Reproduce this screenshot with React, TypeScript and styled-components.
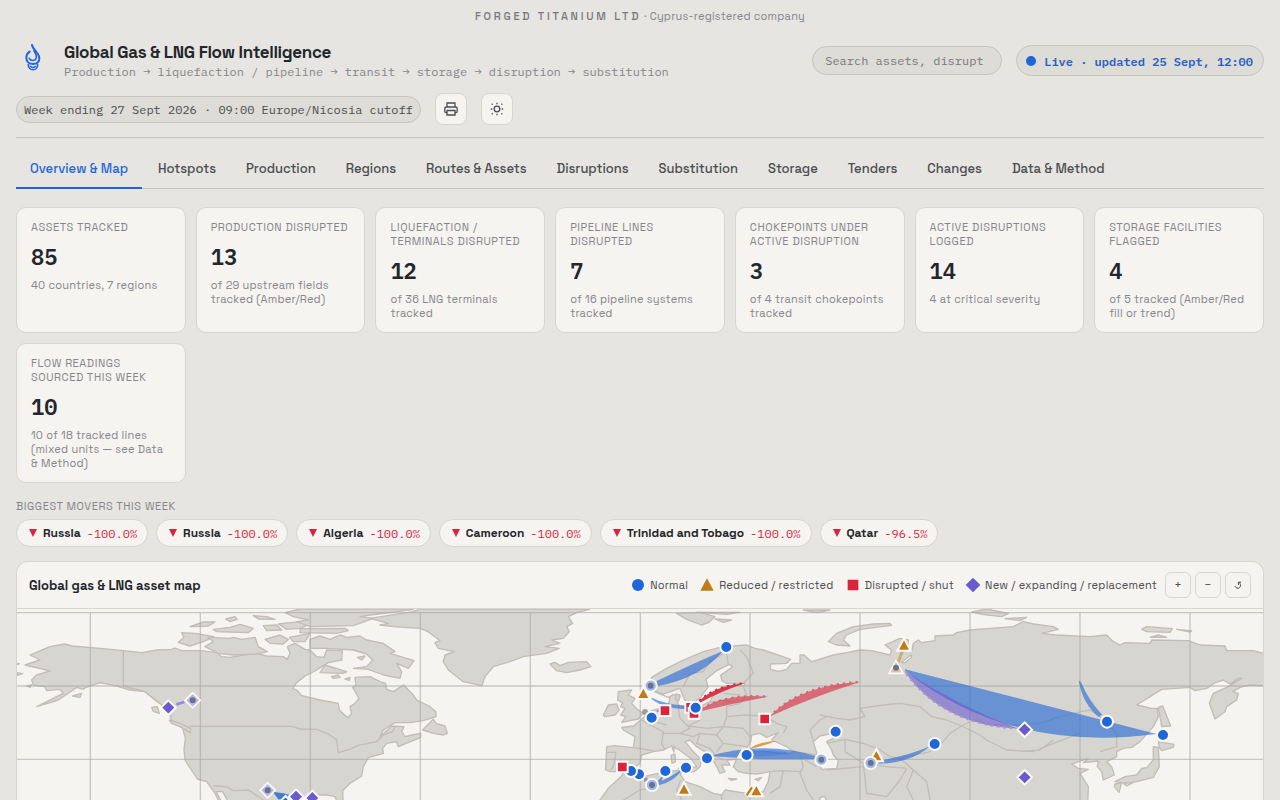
import React from 'react';
import styled, { createGlobalStyle } from 'styled-components';

const sans = '"Space Grotesk", Inter, "Liberation Sans", sans-serif';
const mono = '"IBM Plex Mono", "Liberation Mono", monospace';

const c = {
  page: '#e6e5e1',
  card: '#f5f4f0',
  sunken: '#dddcd6',
  line: '#c5c4c0',
  soft: '#d6d5cf',
  ink: '#23262b',
  text: '#4a4d50',
  muted: '#85868a',
  blue: '#1f66d9',
  red: '#d9243c',
  amber: '#c07c16',
  violet: '#6a5acd',
  land: '#d6d5d0',
  coast: '#c2bdb5',
};

const GlobalStyle = createGlobalStyle`
  * { box-sizing: border-box; }
  body { margin: 0; background: ${c.page}; color: ${c.ink}; font-family: ${sans}; }
  button, input { font: inherit; }
`;

const Page = styled.div`
  padding: 0 16px;
`;

const CompanyLine = styled.div`
  padding: 10px 0;
  text-align: center;
  font-size: 11px;
  line-height: 13px;
  letter-spacing: 0.02em;
  color: ${c.muted};
  strong {
    font-weight: 500;
    letter-spacing: 0.25em;
    color: #77787a;
  }
`;

const Header = styled.header`
  display: flex;
  flex-wrap: wrap;
  align-items: center;
  gap: 14px;
  padding: 8px 0 12px;
  border-bottom: 1px solid ${c.line};
`;

const Brand = styled.div`
  display: flex;
  flex: 1;
  align-items: flex-start;
  gap: 14px;
  height: 38px;
`;

const BrandMark = styled.svg`
  width: 34px;
  height: 34px;
`;

const Title = styled.h1`
  margin: 0;
  font-size: 17px;
  font-weight: 600;
  line-height: 22px;
  letter-spacing: -0.02em;
`;

const Subtitle = styled.p`
  margin: 0;
  font-family: ${mono};
  font-size: 12px;
  line-height: 18px;
  color: ${c.muted};
`;

const Search = styled.input`
  width: 190px;
  height: 29px;
  padding: 0 18px 0 12px;
  border: 1px solid ${c.line};
  border-radius: 15px;
  background: ${c.sunken};
  font-family: ${mono};
  font-size: 12px;
  &::placeholder {
    color: #77777a;
    opacity: 1;
  }
`;

const Live = styled.div`
  display: flex;
  align-items: center;
  gap: 8px;
  height: 31px;
  padding: 2px 10px 0 9px;
  border: 1px solid ${c.line};
  border-radius: 16px;
  background: ${c.sunken};
  font-family: ${mono};
  font-size: 12px;
  font-weight: 600;
  color: #2b5fc4;
  &::before {
    content: '';
    width: 10px;
    height: 10px;
    border-radius: 50%;
    background: ${c.blue};
  }
`;

const HeaderRow = styled.div`
  display: flex;
  flex-basis: 100%;
  align-items: center;
  gap: 14px;
`;

const WeekPill = styled.div`
  height: 27px;
  padding: 0 7px;
  border: 1px solid ${c.line};
  border-radius: 14px;
  background: ${c.sunken};
  font-family: ${mono};
  font-size: 12px;
  line-height: 26px;
  color: ${c.text};
`;

const IconButton = styled.button`
  display: grid;
  place-items: center;
  width: 32px;
  height: 32px;
  padding: 0;
  border: 1px solid ${c.soft};
  border-radius: 8px;
  background: ${c.card};
  color: ${c.text};
`;

const Tabs = styled.nav`
  display: flex;
  gap: 2px;
  margin-top: 12px;
  border-bottom: 1px solid ${c.line};
`;

const Tab = styled.a<{ $active?: boolean }>`
  padding: 10px 14px 9px;
  border-bottom: 2px solid ${(p) => (p.$active ? c.blue : 'transparent')};
  margin-bottom: -1px;
  font-size: 13px;
  font-weight: 500;
  line-height: 18px;
  color: ${(p) => (p.$active ? c.blue : c.text)};
  text-decoration: none;
`;

const Cards = styled.section`
  display: grid;
  grid-template-columns: repeat(auto-fill, minmax(160px, 1fr));
  gap: 10px;
  margin-top: 18px;
`;

const Card = styled.article`
  min-height: 126px;
  padding: 12px 14px;
  border: 1px solid ${c.soft};
  border-radius: 10px;
  background: ${c.card};
`;

const Label = styled.h2`
  margin: 0;
  font-size: 11px;
  font-weight: 400;
  line-height: 14px;
  letter-spacing: 0.05em;
  text-transform: uppercase;
  color: ${c.muted};
`;

const Value = styled.div`
  margin: 8px 0 6px;
  font-family: ${mono};
  font-size: 22px;
  font-weight: 600;
  line-height: 30px;
`;

const Note = styled.p`
  margin: 0;
  font-size: 11px;
  line-height: 14px;
  letter-spacing: 0.02em;
  color: ${c.muted};
`;

const Movers = styled.section`
  margin-top: 16px;
`;

const Chips = styled.div`
  display: flex;
  flex-wrap: wrap;
  gap: 8px;
  margin-top: 6px;
`;

const Chip = styled.div`
  display: flex;
  align-items: center;
  gap: 6px;
  height: 28px;
  padding: 0 10px 0 12px;
  border: 1px solid ${c.soft};
  border-radius: 14px;
  background: ${c.card};
  font-size: 12px;
  font-weight: 600;
  svg {
    width: 8px;
    height: 9px;
    fill: ${c.red};
  }
  span {
    font-family: ${mono};
    font-weight: 400;
    color: ${c.red};
  }
`;

const Panel = styled.section`
  margin-top: 14px;
  border: 1px solid ${c.soft};
  border-bottom: 0;
  border-radius: 12px 12px 0 0;
  overflow: hidden;
  background: ${c.card};
`;

const PanelHead = styled.div`
  display: flex;
  align-items: center;
  justify-content: space-between;
  height: 47px;
  padding: 0 12px;
  border-bottom: 1px solid ${c.soft};
`;

const PanelTitle = styled.h2`
  margin: 0;
  font-size: 13px;
  font-weight: 600;
`;

const Legend = styled.div`
  display: flex;
  align-items: center;
  gap: 12px;
  font-size: 11px;
  letter-spacing: 0.02em;
  color: ${c.text};
`;

const LegendItem = styled.span`
  display: flex;
  align-items: center;
  gap: 5px;
  svg {
    width: 14px;
    height: 14px;
    overflow: visible;
  }
`;

const Zoom = styled.div`
  display: flex;
  gap: 4px;
  margin-left: -4px;
`;

const ZoomButton = styled.button`
  width: 26px;
  height: 26px;
  padding: 0;
  border: 1px solid ${c.soft};
  border-radius: 6px;
  background: ${c.card};
  font-size: 12px;
  color: ${c.text};
`;

const MapSvg = styled.svg`
  display: block;
  width: 100%;
`;

type Kind = 'circle' | 'triangle' | 'square' | 'diamond';

const fills: Record<Kind, string> = {
  circle: c.blue,
  triangle: c.amber,
  square: c.red,
  diamond: c.violet,
};

function Shape({ kind }: { kind: Kind }) {
  if (kind === 'circle') return <circle r="18" />;
  if (kind === 'triangle') return <path d="M0-20L20 17H-20Z" />;
  if (kind === 'square') return <path d="M-16-16H16V16H-16Z" />;
  return <path d="M0-22L22 0L0 22L-22 0Z" />;
}

function Marker({ kind, x, y, muted }: { kind: Kind; x: number; y: number; muted?: boolean }) {
  return (
    <g transform={`translate(${x} ${y})`}>
      <g fill={muted ? c.card : fills[kind]} stroke="#fbfaf8" strokeWidth="6">
        <Shape kind={kind} />
      </g>
      {muted && (
        <>
          <g fill={fills[kind]} opacity="0.4" transform="scale(.86)">
            <Shape kind={kind} />
          </g>
          <circle r="9" fill="#68718f" />
        </>
      )}
    </g>
  );
}

const markers: [Kind, number, number, boolean?][] = [
  ['diamond', 578, 301, true],
  ['diamond', 505, 323],
  ['diamond', 803, 571, true],
  ['diamond', 888, 590],
  ['diamond', 937, 594],
  ['circle', 2179, 141],
  ['circle', 1952, 257, true],
  ['triangle', 1930, 280],
  ['square', 1995, 332],
  ['circle', 1955, 353],
  ['square', 2072, 322],
  ['square', 2082, 340],
  ['circle', 2087, 323],
  ['square', 2294, 357],
  ['circle', 2507, 395],
  ['circle', 2240, 465],
  ['circle', 2121, 475],
  ['circle', 2464, 479, true],
  ['circle', 2058, 503],
  ['circle', 1996, 513],
  ['circle', 1917, 523],
  ['circle', 1893, 513],
  ['square', 1867, 501],
  ['circle', 1956, 555, true],
  ['triangle', 2052, 567],
  ['triangle', 2269, 572],
  ['triangle', 2712, 135],
  ['triangle', 2688, 203, true],
  ['triangle', 2629, 467],
  ['circle', 2612, 489, true],
  ['circle', 2804, 432],
  ['diamond', 3074, 389],
  ['diamond', 3074, 532],
  ['circle', 3321, 365],
  ['circle', 3489, 405],
];

const land = [
  // North America
  'M90 165L150 140L195 132L215 138L300 145L370 152L425 158L470 150L515 148L525 144L545 152L600 152L650 158L665 170L690 172L740 164L770 160L800 168L850 170L862 178L870 160L862 140L885 130L915 148L930 150L950 170L972 172L980 150L1027 152L1025 180L985 188L965 200L945 213L915 228L890 248L878 265L890 270L905 287L960 300L1015 310L1018 330L1043 353L1055 340L1050 320L1065 310L1077 295L1058 262L1068 255L1065 232L1110 230L1140 245L1157 250L1160 268L1180 275L1210 255L1240 285L1250 300L1290 320L1308 335L1308 350L1270 362L1230 368L1185 368L1150 390L1140 410L1175 378L1212 380L1205 395L1215 410L1235 405L1262 400L1262 412L1195 440L1190 425L1160 430L1148 445L1150 460L1105 473L1090 500L1085 528L1050 550L1028 572L1030 620L1018 620L1005 590L980 585L940 585L920 592L860 590L845 620L665 620L645 580L620 545L592 537L555 480L552 450L556 415L548 385L515 360L500 325L465 300L435 275L390 270L350 258L300 248L258 262L250 268L230 262L175 300L110 320L190 280L180 268L140 272L135 260L100 255L95 240L110 225L150 213L130 208L75 195L120 180Z',
  'M545 98L585 100L642 110L610 125L570 138L535 127L552 112Z',
  'M625 112L690 115L700 112L725 118L765 112L775 140L802 155L770 162L700 165L655 160L615 140L640 125Z',
  'M570 80L610 66L645 66L625 78Z',
  'M640 88L690 82L720 73L760 85L745 98L690 96L650 95Z',
  'M677 57L705 50L712 58L690 65Z',
  'M760 47L800 50L825 58L775 57Z',
  'M790 77L830 75L845 90L800 92Z',
  'M795 118L840 105L865 118L850 132L810 130Z',
  'M835 72L900 65L925 75L900 85L860 88Z',
  'M868 112L930 100L915 125L880 125Z',
  'M855 38L900 27L1190 27L1240 29L1110 45L1080 50L1120 55L1060 77L930 80L890 65L925 60L880 50Z',
  'M900 86L1035 85L1045 92L1010 100L900 98Z',
  'M930 118L960 108L990 118L1020 105L1040 112L1080 108L1100 120L1150 130L1185 155L1170 160L1242 182L1225 205L1190 190L1205 215L1200 235L1150 225L1105 208L1060 205L1100 200L1118 180L1100 162L1060 150L980 145L930 145Z',
  'M1072 172L1095 168L1085 180Z',
  'M975 195L1040 215L1030 220L960 218Z',
  'M995 230L1015 225L1020 232L1000 235Z',
  'M1035 237L1050 232L1048 241Z',
  'M1268 390L1300 357L1308 370L1335 378L1342 400L1330 405L1300 400Z',
  'M455 322L472 320L478 340L460 334Z',
  'M508 360L540 370L572 385L570 398L545 382L515 370Z',
  'M51 190L58 191L51 194ZM51 218L68 221L51 226ZM80 258L95 255L90 262Z',
  'M218 288L245 280L240 292Z',
  // Greenland and Iceland
  'M1260 27L1770 27L1730 38L1705 50L1718 70L1700 80L1708 95L1690 115L1655 120L1680 130L1635 140L1678 145L1640 160L1570 170L1530 185L1480 200L1455 230L1445 257L1390 245L1345 210L1330 185L1335 165L1362 155L1315 145L1305 128L1320 122L1285 95L1260 85L1180 80L1140 75L1165 70L1110 55L1240 35Z',
  'M1650 192L1665 187L1680 197L1705 187L1760 185L1773 200L1740 210L1700 218L1670 212Z',
  // British Isles
  'M1855 275L1895 270L1885 285L1905 295L1895 310L1912 328L1928 340L1915 357L1865 367L1878 350L1862 345L1875 325L1862 320L1868 308L1853 300Z',
  'M1810 345L1825 315L1850 312L1857 330L1845 345L1815 350Z',
  // Eurasia and North Africa
  'M1820 440L1845 437L1900 443L1905 410L1870 390L1865 382L1900 378L1920 362L1935 348L1955 332L1980 325L2005 315L2012 285L1985 280L1960 270L1953 245L1955 232L2000 205L2050 180L2110 155L2170 140L2240 135L2265 145L2290 150L2372 178L2360 190L2310 192L2312 208L2335 214L2360 208L2375 190L2400 190L2400 165L2412 165L2435 185L2500 165L2540 158L2580 150L2615 152L2670 165L2675 150L2655 135L2700 115L2725 120L2722 150L2735 155L2740 130L2755 120L2765 128L2805 122L2805 108L2860 105L2870 98L2910 90L3040 80L3070 65L3100 72L3160 80L3175 88L3125 100L3170 105L3270 110L3320 105L3340 125L3360 135L3375 128L3450 130L3455 120L3565 122L3600 135L3675 138L3680 152L3760 152L3800 162V258L3750 255L3720 262L3698 275L3715 280L3710 300L3680 320L3675 335L3645 357L3628 310L3640 280L3680 262L3725 235L3715 235L3690 252L3670 240L3645 248L3620 265L3585 272L3570 262L3485 268L3410 315L3455 325L3472 325L3475 350L3460 380L3420 425L3395 442L3370 445L3350 455L3350 470L3320 485L3335 500L3343 525L3310 540L3305 515L3292 500L3295 483L3250 488L3265 475L3215 492L3235 505L3265 508L3240 520L3265 560L3263 620H1790L1800 600L1825 565L1865 528L1870 515L1830 515L1817 510Z',
  'M2030 40L2100 37L2145 50L2125 68L2105 75L2060 58Z',
  'M2145 57L2195 60L2170 67ZM2090 37L2220 37L2180 43ZM2410 30L2490 30L2450 38Z',
  'M2485 125L2510 100L2560 80L2620 72L2670 70L2675 76L2580 88L2540 105L2530 120L2550 138L2510 135Z',
  'M2915 36L2960 27L3025 40L3005 50L2950 44ZM3015 56L3080 52L3060 62Z',
  'M3425 88L3440 80L3517 86L3510 97L3440 95ZM3530 88L3575 93L3570 96ZM3450 112L3475 105L3500 112Z',
  'M3475 322L3488 318L3512 378L3485 380Z',
  'M3475 425L3522 433L3520 442L3485 452L3478 442Z',
  'M3460 440L3475 442L3478 500L3460 532L3410 545L3380 550L3345 545L3375 530L3410 525L3425 505L3440 503L3460 480Z',
  'M3345 552L3365 548L3357 577L3343 560ZM3370 550L3400 547L3380 558Z',
];

const seas = [
  // Baltic and Skagerrak
  'M1955 272L1988 283L2025 270L2040 265L2048 285L2060 312L2068 314L2098 296L2124 262L2118 238L2150 212L2188 193L2198 200L2162 226L2166 243L2180 250L2235 250L2235 257L2185 257L2165 262L2140 285L2130 305L2100 320L2068 322L2040 318L2032 310L2040 290L2020 284L2005 292Z',
  // Mediterranean
  'M1868 518L1895 510L1920 490L1925 465L1960 455L1990 450L2015 438L2035 448L2075 478L2090 500L2060 505L2035 505L2065 517L2082 515L2100 500L2105 480L2080 455L2055 425L2070 420L2090 440L2130 465L2145 490L2160 520L2175 515L2165 495L2190 495L2180 480L2210 478L2200 500L2215 515L2240 520L2270 522L2310 515L2305 545L2290 575L2240 580L2175 570L2165 585L2140 580L2100 560L2055 545L2042 525L2045 510L2000 515L1930 530L1895 528Z',
  // Black Sea
  'M2240 445L2252 425L2255 405L2280 400L2300 412L2335 398L2315 420L2360 440L2380 455L2370 462L2300 455L2250 452Z',
  // Caspian
  'M2440 425L2460 408L2495 400L2500 415L2480 425L2495 450L2500 465L2515 482L2510 505L2465 508L2455 485L2450 460Z',
  'M648 575L668 575L690 615L670 615Z',
  'M2705 187L2733 165L2735 172L2715 188ZM2460 592L2475 590L2485 620L2460 620Z',
];

const islands = ['M2013 466L2025 462L2026 486L2016 490Z', 'M2016 442L2023 438L2022 456Z', 'M2042 507L2075 503L2070 516Z', 'M2028 282L2040 285L2036 302L2026 298Z', 'M2185 535L2210 537L2195 541ZM2265 538L2285 532L2275 542Z'];

const borders = [
  'M370 152V258L435 275L480 310',
  'M570 379H875L900 387L950 388L985 402L1010 420L1015 458L1050 448L1075 436L1130 425L1150 405L1178 395L1185 380',
  'M640 558L680 560L700 572L745 570L790 600',
  'M1822 457L1848 457L1840 500L1832 510M1900 443L1960 452M1925 360L1950 375L1990 395L1985 430L1995 450M1955 340L1965 365L2000 375M1985 400L2040 400L2070 385L2040 355L2035 325M2095 325L2100 360L2065 378L2120 385L2170 380L2180 350L2180 320M2040 400L2080 410L2100 400L2150 405L2170 380M2100 400L2090 430L2130 445L2150 470L2170 480M2150 405L2170 430L2240 440M2170 430L2150 455M2180 350L2240 345L2300 350L2330 370L2360 380L2350 400M2180 320L2220 310L2240 285L2230 260M2120 310L2170 300L2220 310M2170 280L2220 285M2170 380L2230 385L2250 410M2230 250L2260 220L2240 170L2220 150M2130 185L2110 215L2070 220L2050 260M2130 185L2170 160M2180 160L2185 195M2380 455L2420 460L2450 465M2400 460L2410 500L2400 520L2420 570L2440 600M2310 515L2350 512L2400 515M2350 512L2340 560L2310 580M2165 585V620M1970 560L1920 570L1870 600M2042 540L2030 570L2045 600M2415 480L2450 500',
  'M2460 345L2510 355L2550 360L2595 350L2580 325L2650 315L2700 310L2760 320L2795 350L2840 360L2885 378L2920 360L2970 375L3060 375L3120 370L3180 350L3245 335L3270 330L3300 350L3350 400',
  'M2885 378L2940 405L2960 420L3020 450L3100 455L3160 430L3240 400M2885 378L2850 400L2825 430L2790 455L2700 475L2740 510L2780 545L2790 600M2480 430L2535 418V455M2535 418L2590 430L2640 450L2670 470L2700 475M2535 455L2590 490L2660 500L2720 505M2590 490L2600 580L2660 590L2700 540L2720 505M2480 510L2590 500M2740 510L2720 560L2740 600M2440 425L2430 390L2460 360L2480 350M3350 400V440L3300 455M3060 455L3120 450L3160 420',
];

const bands: [string, string, number][] = [
  ['M1970 243Q2080 190 2170 152Q2100 235 1972 258Z', c.blue, 0.6],
  ['M1955 293Q2000 316 2080 318V328Q1990 328 1955 297Z', c.blue, 0.6],
  ['M2098 302Q2145 258 2236 249Q2160 275 2100 308Z', c.red, 0.9],
  ['M2105 326Q2180 280 2304 290Q2200 310 2105 333Z', c.red, 0.6],
  ['M2308 350Q2400 255 2580 246Q2440 290 2308 350Z', c.red, 0.6],
  ['M2248 446Q2280 424 2331 422Q2290 438 2250 447Z', '#cf8c22', 0.8],
  ['M2130 468Q2300 420 2460 472V478L2280 478Z', c.blue, 0.6],
  ['M2245 460Q2310 440 2375 460Q2310 472 2245 468Z', c.blue, 0.25],
  ['M1972 550Q2015 530 2050 505Q2025 545 1976 556ZM1968 550L1992 522L1984 545Z', c.blue, 0.6],
  ['M2715 208L3470 402Q3028 460 2715 212Z', c.blue, 0.6],
  ['M2712 212Q2880 320 3055 386Q2825 375 2712 212Z', c.violet, 0.6],
  ['M2640 482Q2740 462 2792 437Q2730 490 2635 491Z', c.blue, 0.6],
  ['M3237 242L3243 246Q3265 300 3307 345L3295 350Q3248 310 3237 245Z', c.blue, 0.6],
  ['M528 309L552 302L554 310L530 317ZM1932 533H1943V544H1932ZM1970 330H1977V336H1970Z', c.violet, 0.6],
  ['M818 575L850 580L880 588L860 602L835 598Z', c.blue, 0.8],
];

const dotted: [string, string][] = [
  ['M2098 302Q2145 258 2236 249', c.red],
  ['M2105 326Q2180 280 2304 290', '#d9646f'],
  ['M2308 350Q2400 255 2580 246', '#d9646f'],
  ['M3055 386Q2825 375 2712 212', '#a79ad4'],
];

function AssetMap() {
  return (
    <MapSvg viewBox="51 27 3738 573" role="img" aria-label="World map of gas and LNG assets">
      <g fill={c.land} stroke={c.coast} strokeWidth="4" strokeLinejoin="round">
        {land.map((d) => <path key={d} d={d} />)}
        <g fill={c.card}>{seas.map((d) => <path key={d} d={d} />)}</g>
        {islands.map((d) => <path key={d} d={d} />)}
        <g fill="none">{borders.map((d) => <path key={d} d={d} />)}</g>
      </g>
      <g stroke="#aaa9a4" strokeOpacity="0.6" strokeWidth="4">
        {[271, 601, 931, 1261, 1591, 1921, 2250, 2580, 2910, 3240, 3570].map((x) => (
          <path key={x} d={`M${x} 38V620`} />
        ))}
        {[38, 258, 478].map((y) => <path key={y} d={`M51 ${y}H3789`} />)}
      </g>
      {bands.map(([d, fill, opacity]) => <path key={d} d={d} fill={fill} opacity={opacity} />)}
      <g fill="none" strokeWidth="6" strokeDasharray="7 12">
        {dotted.map(([d, stroke]) => <path key={d} d={d} stroke={stroke} />)}
      </g>
      <path d="M2695 186L2708 150" stroke="#cda35a" strokeWidth="9" opacity="0.8" />
      <path d="M2210 475L2228 442L2240 475Z" fill="#fbfaf8" />
      <path d="M2238 586L2256 562" stroke="#fbfaf8" strokeWidth="14" />
      <path d="M2240 586L2256 562" stroke={c.amber} strokeWidth="7" />
      <circle cx="1935" cy="336" r="9" fill="#9d9ea3" />
      <path d="M838 606L857 588L872 606Z" fill={c.blue} stroke="#fbfaf8" strokeWidth="6" />
      {markers.map(([kind, x, y, muted]) => (
        <Marker key={`${x}-${y}`} kind={kind} x={x} y={y} muted={muted} />
      ))}
    </MapSvg>
  );
}

const tabs = ['Overview & Map', 'Hotspots', 'Production', 'Regions', 'Routes & Assets', 'Disruptions', 'Substitution', 'Storage', 'Tenders', 'Changes', 'Data & Method'];

const cards = [
  ['Assets tracked', '85', '40 countries, 7 regions'],
  ['Production disrupted', '13', 'of 29 upstream fields tracked (Amber/Red)'],
  ['Liquefaction / terminals disrupted', '12', 'of 36 LNG terminals tracked'],
  ['Pipeline lines disrupted', '7', 'of 16 pipeline systems tracked'],
  ['Chokepoints under active disruption', '3', 'of 4 transit chokepoints tracked'],
  ['Active disruptions logged', '14', '4 at critical severity'],
  ['Storage facilities flagged', '4', 'of 5 tracked (Amber/Red fill or trend)'],
  ['Flow readings sourced this week', '10', '10 of 18 tracked lines (mixed units — see Data & Method)'],
];

const movers = [
  ['Russia', '-100.0%'],
  ['Russia', '-100.0%'],
  ['Algeria', '-100.0%'],
  ['Cameroon', '-100.0%'],
  ['Trinidad and Tobago', '-100.0%'],
  ['Qatar', '-96.5%'],
];

const legend: [Kind, string][] = [
  ['circle', 'Normal'],
  ['triangle', 'Reduced / restricted'],
  ['square', 'Disrupted / shut'],
  ['diamond', 'New / expanding / replacement'],
];

export default function App() {
  return (
    <>
      <GlobalStyle />
      <Page>
        <CompanyLine>
          <strong>FORGED TITANIUM LTD</strong> · Cyprus-registered company
        </CompanyLine>
        <Header>
          <Brand>
            <BrandMark viewBox="0 0 102 102" fill="none" stroke={c.blue} strokeWidth="6" strokeLinecap="round" aria-hidden="true">
              <path d="M48 12C50 26 70 36 70 52C70 64 61 69 51 69C39 69 31 61 31 50C31 42 35 36 41 32" />
              <path d="M54 29C60 38 63 46 60 53C56 61 44 60 40 52" strokeWidth="5" />
              <path d="M37 71C37 91 65 91 65 71" strokeWidth="5" />
              <path d="M43 76C47 80 55 80 59 76" strokeWidth="4" />
            </BrandMark>
            <div>
              <Title>Global Gas &amp; LNG Flow Intelligence</Title>
              <Subtitle>Production → liquefaction / pipeline → transit → storage → disruption → substitution</Subtitle>
            </div>
          </Brand>
          <Search type="text" aria-label="Search" placeholder="Search assets, disruptions" />
          <Live>Live · updated 25 Sept, 12:00</Live>
          <HeaderRow>
            <WeekPill>Week ending 27 Sept 2026 · 09:00 Europe/Nicosia cutoff</WeekPill>
            <IconButton aria-label="Print">
              <svg width="16" height="16" viewBox="0 0 16 16" fill="none" stroke="currentColor" strokeWidth="1.3">
                <path d="M4 6V2H12V6M4 11.5H3Q1.8 11.5 1.8 10.3V7.5Q1.8 6 3.3 6H12.7Q14.2 6 14.2 7.5V10.3Q14.2 11.5 13 11.5H12M4 9.5H12V14H4Z" />
              </svg>
            </IconButton>
            <IconButton aria-label="Switch theme">
              <svg width="16" height="16" viewBox="0 0 16 16" fill="none" stroke="currentColor" strokeWidth="1.3">
                <circle cx="8" cy="8" r="2.8" />
                <path d="M8 1.8V3.3M8 12.7V14.2M1.8 8H3.3M12.7 8H14.2M2.7 2.7L3.6 3.6M12.4 12.4L13.3 13.3M2.7 13.3L3.6 12.4M12.4 3.6L13.3 2.7" />
              </svg>
            </IconButton>
          </HeaderRow>
        </Header>
        <Tabs>
          {tabs.map((tab, i) => (
            <Tab key={tab} href="#" $active={i === 0}>{tab}</Tab>
          ))}
        </Tabs>
        <Cards>
          {cards.map(([label, value, note]) => (
            <Card key={label}>
              <Label>{label}</Label>
              <Value>{value}</Value>
              <Note>{note}</Note>
            </Card>
          ))}
        </Cards>
        <Movers>
          <Label>Biggest movers this week</Label>
          <Chips>
            {movers.map(([name, change], i) => (
              <Chip key={i}>
                <svg viewBox="0 0 8 9" aria-hidden="true"><path d="M0 0H8L4 8Z" /></svg>
                {name}
                <span>{change}</span>
              </Chip>
            ))}
          </Chips>
        </Movers>
        <Panel>
          <PanelHead>
            <PanelTitle>Global gas &amp; LNG asset map</PanelTitle>
            <Legend>
              {legend.map(([kind, text]) => (
                <LegendItem key={kind}>
                  <svg viewBox="-21 -21 42 42" fill={fills[kind]} aria-hidden="true"><Shape kind={kind} /></svg>
                  {text}
                </LegendItem>
              ))}
              <Zoom>
                <ZoomButton aria-label="Zoom in">+</ZoomButton>
                <ZoomButton aria-label="Zoom out">−</ZoomButton>
                <ZoomButton aria-label="Reset view">
                  <svg width="8" height="8" viewBox="0 0 8 8" fill="none" stroke="currentColor" aria-hidden="true">
                    <path d="M5 1.5C7.6 3.5 6.6 7.2 4 7.2C2.4 7.2 1.2 6.2 1.2 4.8M4.4 4V1.2H7" />
                  </svg>
                </ZoomButton>
              </Zoom>
            </Legend>
          </PanelHead>
          <AssetMap />
        </Panel>
      </Page>
    </>
  );
}
